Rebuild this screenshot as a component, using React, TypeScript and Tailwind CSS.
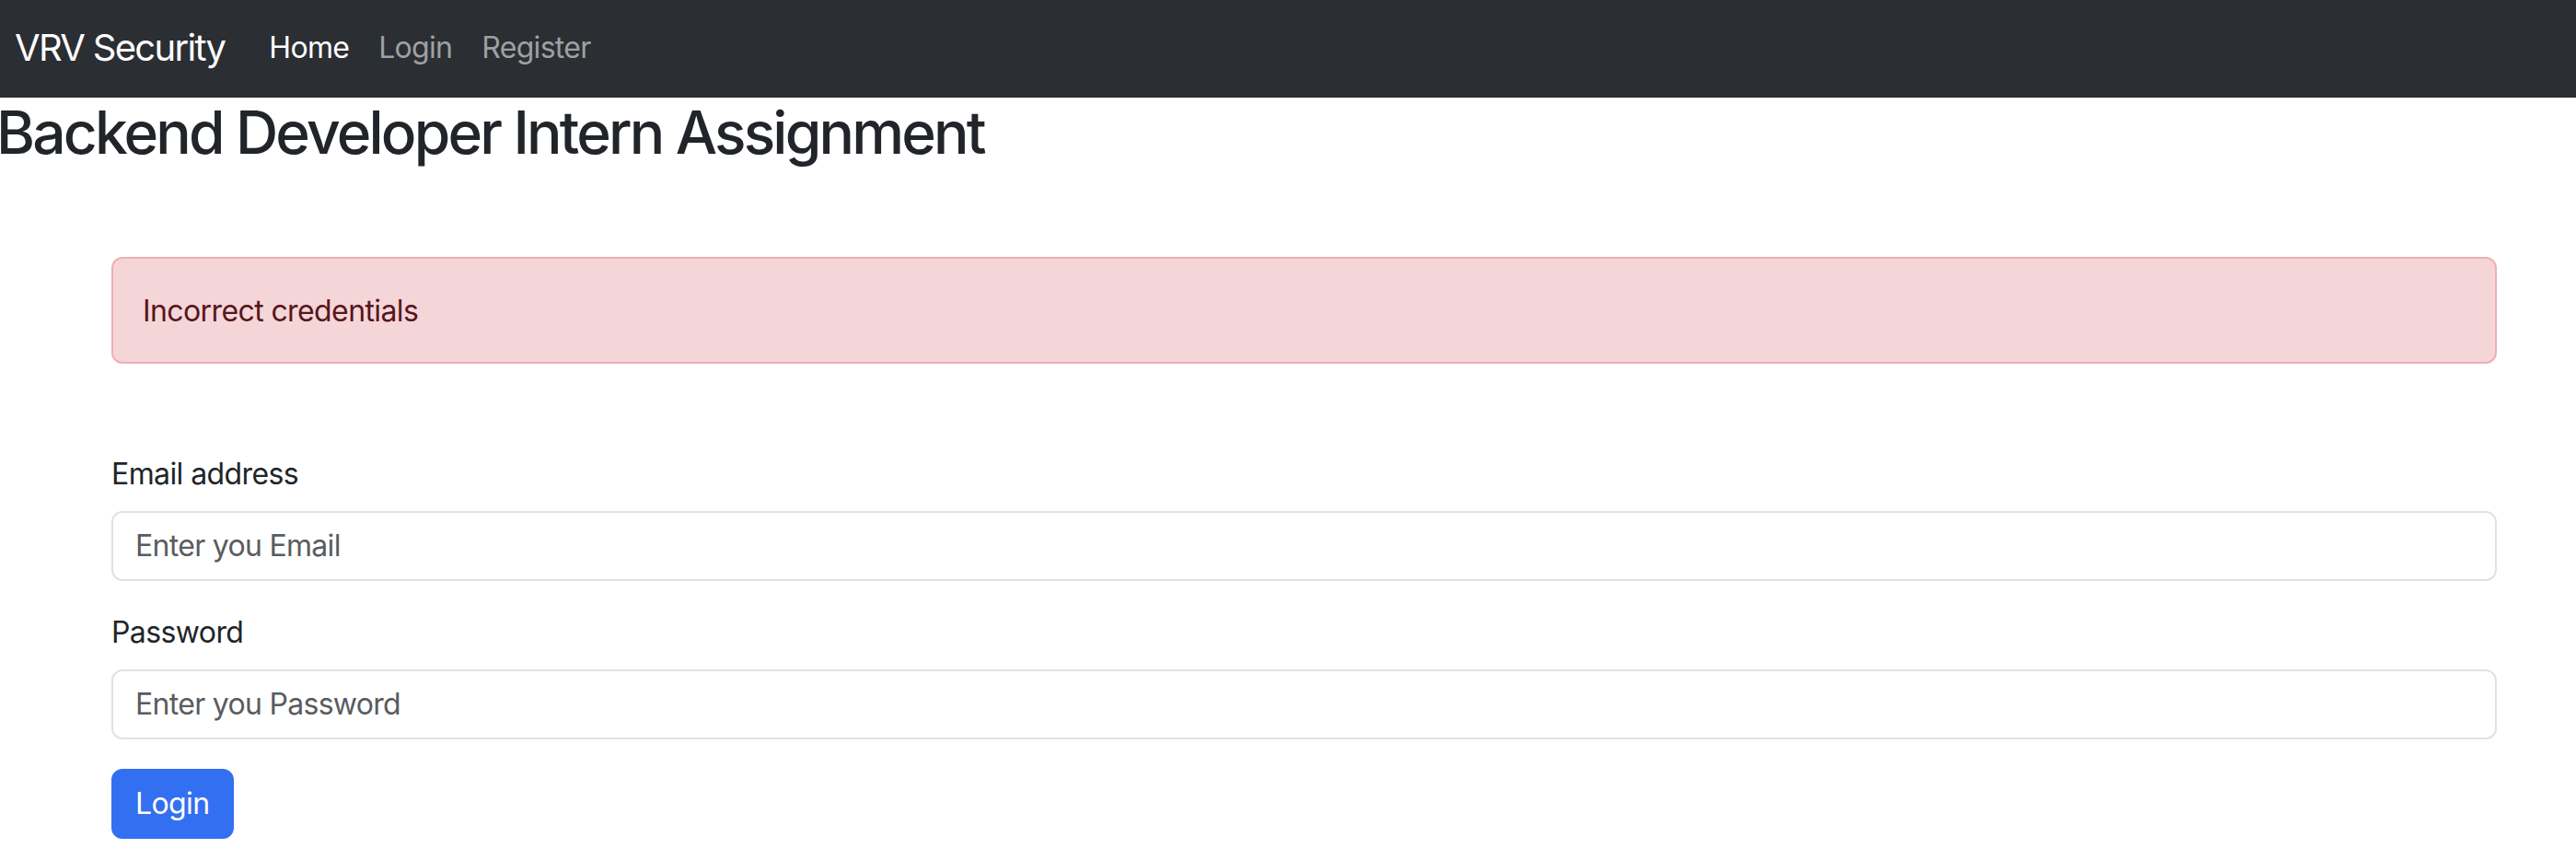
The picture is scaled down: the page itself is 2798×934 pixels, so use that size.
import React from 'react'

const font = { fontFamily: 'Inter, "Noto Sans", sans-serif' }

function Navbar() {
  return (
    <nav className="flex h-[106px] items-center bg-[#2b2e33] pb-[3px] pl-[16px]">
      <a className="mr-[32px] text-[40px] leading-[60px] tracking-[-1.7px] text-white">VRV Security</a>
      <ul className="flex items-center tracking-[-0.7px]">
        <li>
          <a className="block px-[16px] text-[32px] leading-[48px] text-white">Home</a>
        </li>
        <li>
          <a className="block px-[16px] text-[32px] leading-[48px] text-[#9fa0a2]">Login</a>
        </li>
        <li>
          <a className="block px-[16px] text-[32px] leading-[48px] text-[#9fa0a2]">Register</a>
        </li>
      </ul>
    </nav>
  )
}

function Field({ label, type, placeholder }: { label: string; type: string; placeholder: string }) {
  return (
    <div className="mb-[32px]">
      <label className="mb-[16px] block text-[32px] leading-[48px] text-[#212529]">{label}</label>
      <input
        type={type}
        placeholder={placeholder}
        className="block h-[76px] w-full rounded-[12px] border-2 border-[#dee2e6] bg-white px-[24px] text-[32px] leading-[48px] tracking-[-0.7px] text-[#212529] outline-none placeholder:text-[#595c5f]"
      />
    </div>
  )
}

export default function App() {
  return (
    <div className="min-h-screen bg-white tracking-[-0.6px]" style={font}>
      <Navbar />
      <h2 className="-ml-[4px] text-[64px] font-medium leading-[1.2] tracking-[-2.8px] text-[#212529]">
        Backend Developer Intern Assignment
      </h2>
      <div className="ml-[121px] w-[2591px]">
        <div className="mt-[96px] rounded-[12px] border-2 border-[#edb0b5] bg-[#f4d6d9] px-[32px] pb-[31px] pt-[33px] text-[32px] leading-[48px] text-[#58151c]">
          Incorrect credentials
        </div>
        <form className="mt-[96px]" onSubmit={(e) => e.preventDefault()}>
          <Field label="Email address" type="email" placeholder="Enter you Email" />
          <Field label="Password" type="password" placeholder="Enter you Password" />
          <button
            type="submit"
            className="h-[76px] rounded-[12px] border-2 border-[#336ff1] bg-[#336ff1] px-[24px] text-[32px] leading-[48px] text-white"
          >
            Login
          </button>
        </form>
      </div>
    </div>
  )
}
